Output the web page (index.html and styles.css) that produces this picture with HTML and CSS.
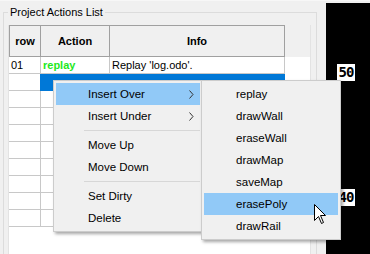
FILE: index.html
```html
<!DOCTYPE html>
<html lang="en">
<head>
    <meta charset="UTF-8">
    <title>Project Actions</title>
    <link rel="stylesheet" href="styles.css">
</head>
<body>
    <div class="app">
        <div class="main">
            <div class="group">
                <div class="group-title">Project Actions List</div>
                <div class="grid">
                    <div class="row head">
                        <div class="cell c-row">row</div>
                        <div class="cell c-action">Action</div>
                        <div class="cell c-info">Info</div>
                    </div>
                    <div class="row">
                        <div class="cell c-row">01</div>
                        <div class="cell c-action green">replay</div>
                        <div class="cell c-info">Replay 'log.odo'.</div>
                    </div>
                    <div class="row selected">
                        <div class="cell c-row"></div>
                        <div class="cell c-action"></div>
                        <div class="cell c-info"></div>
                    </div>
                    <div class="row"><div class="cell c-row"></div><div class="cell c-action"></div><div class="cell c-info"></div></div>
                    <div class="row"><div class="cell c-row"></div><div class="cell c-action"></div><div class="cell c-info"></div></div>
                    <div class="row"><div class="cell c-row"></div><div class="cell c-action"></div><div class="cell c-info"></div></div>
                    <div class="row"><div class="cell c-row"></div><div class="cell c-action"></div><div class="cell c-info"></div></div>
                    <div class="row"><div class="cell c-row"></div><div class="cell c-action"></div><div class="cell c-info"></div></div>
                    <div class="row"><div class="cell c-row"></div><div class="cell c-action"></div><div class="cell c-info"></div></div>
                    <div class="row"><div class="cell c-row"></div><div class="cell c-action"></div><div class="cell c-info"></div></div>
                    <div class="row"><div class="cell c-row"></div><div class="cell c-action"></div><div class="cell c-info"></div></div>
                </div>
            </div>
        </div>
        <div class="canvas">
            <span class="mark mark-50">50</span>
            <span class="mark mark-40">40</span>
        </div>
    </div>

    <!-- context menu -->
    <ul class="menu menu-main">
        <li class="menu-item hover">Insert Over
            <svg class="chev" width="5" height="9" viewBox="0 0 5 9"><path d="M0.5 0.5 L4 4.5 L0.5 8.5" fill="none" stroke="#333" stroke-width="1"/></svg>
        </li>
        <li class="menu-item">Insert Under
            <svg class="chev" width="5" height="9" viewBox="0 0 5 9"><path d="M0.5 0.5 L4 4.5 L0.5 8.5" fill="none" stroke="#333" stroke-width="1"/></svg>
        </li>
        <li class="menu-sep"></li>
        <li class="menu-item">Move Up</li>
        <li class="menu-item">Move Down</li>
        <li class="menu-sep"></li>
        <li class="menu-item">Set Dirty</li>
        <li class="menu-item">Delete</li>
    </ul>
    <ul class="menu menu-sub">
        <li class="menu-item">replay</li>
        <li class="menu-item">drawWall</li>
        <li class="menu-item">eraseWall</li>
        <li class="menu-item">drawMap</li>
        <li class="menu-item">saveMap</li>
        <li class="menu-item hover">erasePoly</li>
        <li class="menu-item">drawRail</li>
    </ul>

    <svg class="pointer" width="13" height="21" viewBox="0 0 13 21">
        <path d="M0.5 0.5 L0.5 16.5 L4.5 12.5 L7.5 19.5 L9.5 18.5 L6.5 11.5 L11.5 11.5 Z" fill="#fff" stroke="#000" stroke-width="1" stroke-linejoin="miter"/>
    </svg>
</body>
</html>
```

FILE: styles.css
```css
body{
    margin: 0;
    background: #f0f0f0;
    font-family: "Liberation Sans", Arial, sans-serif;
    font-size: 11px;
    color: #000;
    overflow: hidden;
}
ul, li{
    list-style: none;
    padding: 0;
    margin: 0;
}
.app{
    display: flex;
    height: 254px;
    padding-top: 2px;
    box-sizing: border-box;
    border-top: 1px solid #f7f7f7;
}
.main{
    width: 326px;
    flex: none;
}
.group{
    margin: 9px 0 0 3px;
    width: 314px;
    height: 242px;
    box-sizing: border-box;
    border: 1px solid #dcdcdc;
    border-bottom: 0;
    padding: 0 5px 0 4px;
}
.group-title{
    width: fit-content;
    margin: -8px 0 0 0;
    padding: 0 2px;
    line-height: 15px;
    background: #f0f0f0;
}
.grid{
    margin-top: 5px;
    width: 303px;
    height: 229px;
    box-sizing: border-box;
    background: #fff;
    border-left: 1px solid #e3e3e3;
    border-right: 1px solid #e3e3e3;
}
.row{
    display: flex;
    height: 17px;
}
.cell{
    height: 17px;
    box-sizing: border-box;
    border-right: 1px solid #c8c8c8;
    border-bottom: 1px solid #c8c8c8;
    padding: 0 2px;
    line-height: 16px;
    white-space: nowrap;
    overflow: hidden;
}
.c-row{ width: 32px; }
.c-action{ width: 69px; }
.c-info{ width: 175px; }
.green{
    color: #1ee81e;
    font-weight: bold;
}
.head{
    height: 32px;
    background: #f0f0f0;
}
.head .cell{
    height: 32px;
    border-top: 1px solid #a0a0a0;
    border-right-color: #a0a0a0;
    border-bottom-color: #a0a0a0;
    line-height: 30px;
    font-weight: bold;
    text-align: center;
}
.head .c-row{
    border-left: 1px solid #a0a0a0;
    width: 32px;
}
.selected .c-action,
.selected .c-info{
    background: #0078d7;
    border-color: #0078d7;
}
.selected .c-action{
    margin-left: -1px;
    width: 70px;
}
.canvas{
    flex: 1;
    background: #000;
    position: relative;
}
.mark{
    position: absolute;
    left: 11px;
    width: 18px;
    height: 17px;
    background: #fff;
    color: #000;
    font-family: "DejaVu Sans Mono", monospace;
    font-weight: bold;
    font-size: 14px;
    line-height: 17px;
    text-align: center;
    letter-spacing: -1px;
}
.mark-50{ top: 61px; }
.mark-40{ top: 186px; }

.menu{
    position: absolute;
    top: 80px;
    background: #f0f0f0;
    border: 1px solid #cccccc;
    padding: 2px;
    box-shadow: 2px 2px 3px rgba(0,0,0,.35);
}
.menu-main{
    left: 53px;
    width: 144px;
}
.menu-sub{
    left: 201px;
    width: 134px;
}
.menu-item{
    display: flex;
    align-items: center;
    height: 22px;
    padding: 0 6px 0 32px;
    font-size: 11.5px;
    color: #000;
}
.menu-item.hover{
    background: #91c9f7;
}
.chev{
    margin-left: auto;
}
.menu-sep{
    height: 1px;
    margin: 3px 0 3px 28px;
    background: #d7d7d7;
}
.pointer{
    position: absolute;
    left: 314px;
    top: 204px;
}
```
